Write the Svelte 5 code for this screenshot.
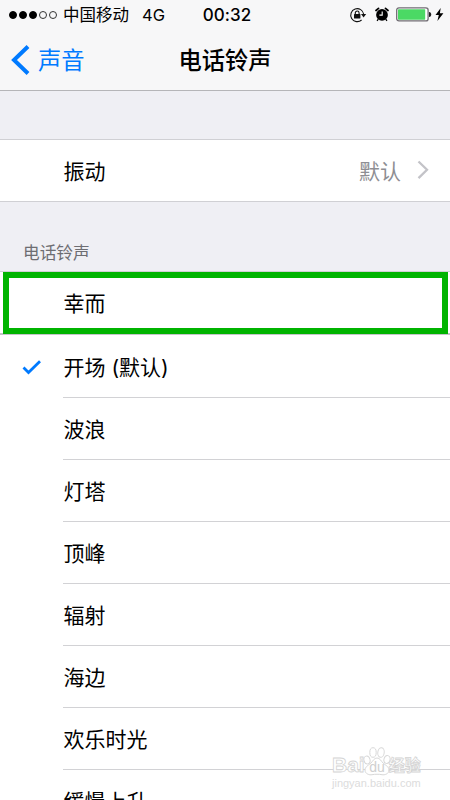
<script lang="ts">
  const signal = [true, true, true, false, false];

  const ringtones = ['波浪', '灯塔', '顶峰', '辐射', '海边', '欢乐时光', '缓慢上升'];

  let selected = '开场 (默认)';
  $: tones = [selected, ...ringtones];
</script>

<div class="screen">
  <header class="header">
    <div class="status">
      <div class="status__left">
        <span class="status__dots">
          {#each signal as on}
            <i class="dot" class:dot--on={on}></i>
          {/each}
        </span>
        <span class="status__carrier">中国移动</span>
        <span class="status__network">4G</span>
      </div>
      <span class="status__time">00:32</span>
      <div class="status__right">
        <svg class="icon-lock" width="18" height="16" viewBox="0 0 18 16">
          <path d="M14.7 7.3A6.5 6.5 0 1 0 12.6 13" fill="none" stroke="#111" stroke-width="1.1" />
          <path d="M12 7h5.200l-2.600 3.400z" fill="#111" />
          <rect x="5" y="7" width="6.4" height="4.500" rx="0.5" fill="#111" />
          <path d="M6.3 7.3V5.900a1.900 1.900 0 0 1 3.800 0v1.400" fill="none" stroke="#111" stroke-width="1.1" />
        </svg>
        <svg class="icon-alarm" width="14" height="15" viewBox="0 0 14 15">
          <circle cx="7" cy="7.9" r="5.9" fill="#000" />
          <path d="M1 3.5 3.5 1.4M10.5 1.4 13 3.5" stroke="#000" stroke-width="1.7" stroke-linecap="round" />
          <path d="m3.3 12-1.2 1.9M10.7 12l1.2 1.9" stroke="#000" stroke-width="1.3" />
          <path d="M7.2 4.4v3.7H4.4" fill="none" stroke="#fff" stroke-width="1.1" />
        </svg>
        <svg class="icon-battery" width="36" height="15" viewBox="0 0 36 15">
          <rect x="0.7" y="0.9" width="31.4" height="13" rx="2.2" fill="#fff" stroke="#706c73" stroke-width="1.3" />
          <rect x="2" y="2.2" width="27.2" height="10.5" rx="0.6" fill="#4bd964" />
          <path d="M33 5c3 .3 3 4.7 0 5z" fill="#222" />
        </svg>
        <svg class="icon-bolt" width="9" height="13" viewBox="0 0 9 13">
          <path d="M5.7 0 .5 7h3.3L2.4 13 8.4 5.200H4.900z" fill="#000" />
        </svg>
      </div>
    </div>
    <nav class="nav">
      <button type="button" class="nav__back">
        <svg width="20" height="30" viewBox="0 0 20 30">
          <path d="M18 1.5 4 15l14 13.5" fill="none" stroke="#007aff" stroke-width="4" />
        </svg>
        <span>声音</span>
      </button>
      <h1 class="nav__title">电话铃声</h1>
    </nav>
  </header>

  <section class="group group--vibration">
    <div class="row">
      <span class="row__label">振动</span>
      <span class="row__value">默认</span>
      <svg class="row__chevron" width="12" height="20" viewBox="0 0 12 20">
        <path d="m1.500 1.5 8.500 8.300-8.500 8.300" fill="none" stroke="#c3c3c8" stroke-width="2.300" />
      </svg>
    </div>
  </section>

  <h2 class="group__title">电话铃声</h2>

  <section class="group">
    <div class="custom">
      <div class="custom__box">幸而</div>
    </div>
    {#each tones as tone}
      <div class="tone">
        <span class="tone__mark">
          {#if tone === selected}
            <svg width="20" height="16" viewBox="0 0 20 16">
              <path d="m1.5 8.5 5 5L18 2.200" fill="none" stroke="#007aff" stroke-width="2.800" />
            </svg>
          {/if}
        </span>
        <span class="tone__name">{tone}</span>
      </div>
    {/each}
  </section>

  <div class="watermark">
    <div class="watermark__logo">
      <span class="watermark__text">Bai</span>
      <svg width="28" height="29" viewBox="0 0 28 29">
        <g fill="#fff" stroke="#d8d8d8" stroke-width="1">
          <ellipse cx="4" cy="13" rx="3" ry="4" transform="rotate(-15 4 13)" />
          <ellipse cx="10" cy="5.5" rx="3.200" ry="4.800" />
          <ellipse cx="18" cy="5.5" rx="3.200" ry="4.800" transform="rotate(8 18 5.5)" />
          <ellipse cx="24" cy="12.5" rx="3" ry="4" transform="rotate(15 24 12.5)" />
          <path d="M14 11c-3 0-4 3-6 5s-6 3.5-6 7c0 4 4.500 5.200 7 4.700 3-.6 7-.6 10 0 2.500.5 7-.7 7-4.700 0-3.500-4-5-6-7s-3-5-6-5z" />
        </g>
        <text x="14" y="25" text-anchor="middle">du</text>
      </svg>
      <span class="watermark__cjk">经验</span>
    </div>
    <div class="watermark__url">jingyan.baidu.com</div>
  </div>
</div>

<style>
  :global(body) {
    overflow: hidden;
  }

  .screen {
    position: relative;
    width: 450px;
    height: 800px;
    overflow: hidden;
    box-sizing: border-box;
    background: #efeff4;
    color: #000;
    font-family: Inter, 'Noto Sans CJK SC', sans-serif;
    font-size: 21px;
  }

  .header {
    height: 90px;
    background: #f7f7f8;
    border-bottom: 1px solid #b5b5b8;
  }

  .status {
    display: grid;
    grid-template-columns: 1fr auto 1fr;
    align-items: center;
    height: 29px;
    padding: 0 6px 0 9px;
  }

  .status__left,
  .status__right {
    display: flex;
    align-items: center;
  }

  .status__right {
    justify-content: flex-end;
  }

  .status__dots {
    display: flex;
    gap: 2px;
    margin-right: 6px;
  }

  .dot {
    box-sizing: border-box;
    width: 8px;
    height: 8px;
    border: 1px solid #333;
    border-radius: 50%;
  }

  .dot--on {
    background: #000;
    border-color: #000;
  }

  .status__carrier {
    font-size: 16.5px;
    line-height: 24px;
  }

  .status__network {
    margin-left: 13px;
    font-size: 16.5px;
  }

  .status__time {
    padding-left: 1px;
    font-size: 17px;
    font-weight: 500;
    letter-spacing: 0.1px;
  }

  .icon-alarm {
    margin-left: 8px;
  }

  .icon-battery {
    margin-left: 7px;
  }

  .icon-bolt {
    margin-left: 3px;
  }

  .nav {
    display: grid;
    grid-template-columns: 1fr auto 1fr;
    align-items: center;
    height: 61px;
  }

  .nav__back {
    display: flex;
    align-items: center;
    gap: 8px;
    padding: 0 0 0 10px;
    border: 0;
    background: none;
    color: #007aff;
    font: inherit;
    font-size: 23.3px;
    line-height: 30px;
  }

  .nav__back span {
    padding-top: 2px;
  }

  .nav__title {
    margin: 0;
    padding-top: 2px;
    font-size: 23.3px;
    font-weight: 500;
    line-height: 30px;
  }

  .group {
    background: #fff;
    border-top: 1px solid #d0d0d4;
  }

  .group--vibration {
    margin-top: 48px;
    border-bottom: 1px solid #d0d0d4;
  }

  .row {
    display: flex;
    align-items: center;
    height: 61px;
    padding: 0 21px 0 63.5px;
  }

  .row__label {
    flex: 1;
    padding-bottom: 2px;
  }

  .row__value {
    margin-right: 16px;
    padding-bottom: 2px;
    color: #8e8e93;
  }

  .row__chevron {
    margin-bottom: 1px;
  }

  .group__title {
    height: 69px;
    box-sizing: border-box;
    margin: 0;
    padding: 39px 0 0 23px;
    color: #6d6d72;
    font-size: 16.7px;
    font-weight: 400;
    line-height: 25px;
  }

  .custom {
    height: 64px;
    box-sizing: border-box;
    padding: 0 2px 0 3px;
    background: linear-gradient(#fff 61px, #c4c4c8 61px, #c4c4c8 63px, #fff 63px);
  }

  .custom__box {
    display: flex;
    align-items: center;
    height: 62px;
    box-sizing: border-box;
    padding: 0 0 3px 54.5px;
    border: 6px solid #00b400;
  }

  .tone {
    display: flex;
    height: 62px;
  }

  .tone__mark {
    display: flex;
    flex: 0 0 63px;
    align-items: center;
    box-sizing: border-box;
    padding-left: 22px;
  }

  .tone__name {
    display: flex;
    flex: 1;
    align-items: center;
    padding: 0 0 2px 0.5px;
    border-bottom: 1px solid #d2d2d5;
  }

  .watermark {
    position: absolute;
    top: 745px;
    left: 332px;
    width: 100px;
    color: #fff;
    font-family: 'Liberation Sans', 'Noto Sans CJK SC', sans-serif;
    -webkit-text-stroke: 0.8px #d4d4d4;
  }

  .watermark__logo {
    display: flex;
    align-items: flex-end;
    height: 31px;
  }

  .watermark__logo svg {
    flex: none;
    margin: 0 -2px 0 -2px;
  }

  .watermark__logo text {
    fill: #d0d0d0;
    stroke: none;
    font-size: 14px;
  }

  .watermark__text {
    font-size: 21px;
    font-weight: 700;
    line-height: 22px;
  }

  .watermark__cjk {
    font-size: 16px;
    font-weight: 700;
    line-height: 20px;
  }

  .watermark__url {
    color: #dcdcdc;
    font-size: 11px;
    line-height: 14px;
    -webkit-text-stroke: 0;
  }
</style>
